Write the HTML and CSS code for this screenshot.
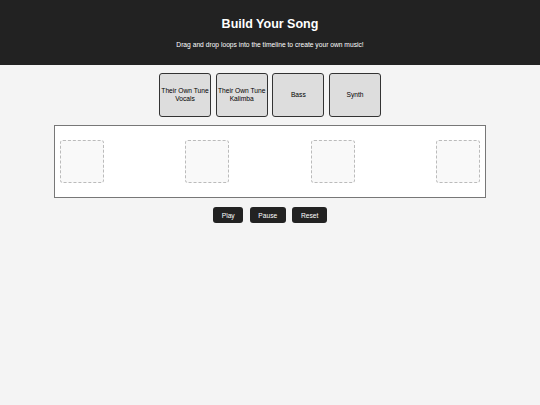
FILE: index.html
```html
<!DOCTYPE html>
<html lang="en">
<head>
<meta charset="utf-8">
<title>Build Your Song</title>
<link rel="stylesheet" href="styles.css">
</head>
<body>
<header class="header">
  <h1 class="title">Build Your Song</h1>
  <p class="subtitle">Drag and drop loops into the timeline to create your own music!</p>
</header>
<main class="main">
  <div class="loops">
    <div class="loop">Their Own Tune Vocals</div>
    <div class="loop">Their Own Tune Kalimba</div>
    <div class="loop">Bass</div>
    <div class="loop">Synth</div>
  </div>
  <div class="timeline">
    <div class="slot"></div>
    <div class="slot"></div>
    <div class="slot"></div>
    <div class="slot"></div>
  </div>
  <div class="controls">
    <button class="btn">Play</button>
    <button class="btn">Pause</button>
    <button class="btn">Reset</button>
  </div>
</main>
</body>
</html>
```
FILE: styles.css
```css
* { box-sizing: border-box; }
html, body {
  margin: 0;
  padding: 0;
  background: #f4f4f4;
  font-family: "Liberation Sans", Arial, sans-serif;
  width: 540px;
  height: 405px;
  overflow: hidden;
}
.header {
  background: #222;
  color: #fff;
  text-align: center;
  height: 65px;
  padding-top: 16.5px;
}
.title {
  margin: 0 0 10px;
  font-size: 12.5px;
  line-height: 14.4px;
  font-weight: bold;
}
.subtitle {
  margin: 0;
  font-size: 6.7px;
  line-height: 7.6px;
}
.main {
  display: flex;
  flex-direction: column;
  align-items: center;
  padding-top: 8px;
}
.loops {
  display: flex;
  gap: 4.67px;
}
.loop {
  width: 52px;
  height: 44px;
  border: 1px solid #333;
  border-radius: 3px;
  background: #ddd;
  display: flex;
  align-items: center;
  justify-content: center;
  text-align: center;
  font-size: 6.67px;
  line-height: 7.6px;
  color: #000;
}
.timeline {
  margin-top: 8px;
  width: 432px;
  height: 73px;
  background: #fff;
  border: 1.5px solid #777;
  display: flex;
  align-items: center;
  justify-content: space-between;
  padding: 0 5px;
}
.slot {
  width: 44px;
  height: 43px;
  border: 1px dashed #bbb;
  border-radius: 3px;
  background: #f9f9f9;
}
.controls {
  margin-top: 9px;
  display: flex;
  gap: 6.67px;
}
.btn {
  font-family: "Liberation Sans", Arial, sans-serif;
  font-size: 6.67px;
  height: 16px;
  padding: 0 8.5px;
  border: none;
  border-radius: 3px;
  background: #222;
  color: #fff;
}
```
